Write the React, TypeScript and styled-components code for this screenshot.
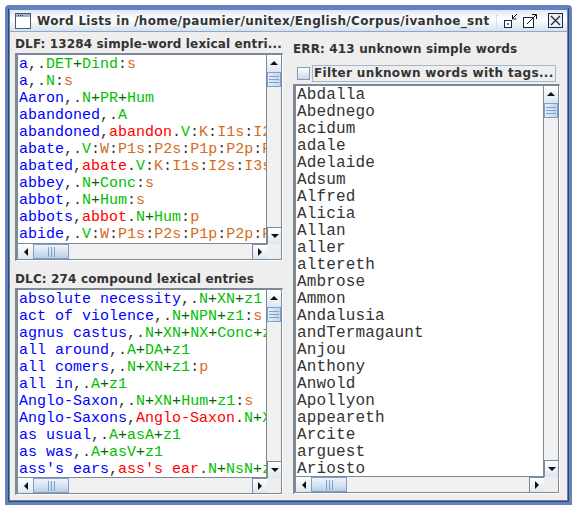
import React from 'react';
import styled, { createGlobalStyle } from 'styled-components';

const GlobalStyle = createGlobalStyle`
  html, body { margin: 0; padding: 0; background: #ffffff; }
  body { font-family: "DejaVu Sans", sans-serif; }
`;

const Frame = styled.div`
  box-sizing: border-box;
  width: 567px;
  height: 500px;
  margin: 5px 0 0 5px;
  border: 3px solid #6382bf;
  padding: 2px 2px 2px 2px;
  border-radius: 4px 4px 0 0;
  background: #6382bf;
  box-shadow: inset 1px 0 0 #3b4658, inset -1px 0 0 #3b4658, inset 0 -1px 0 #3b4658;
  display: flex;
  flex-direction: column;
`;

const Inner = styled.div`
  flex: 1;
  min-height: 0;
  display: flex;
  flex-direction: column;
  background: #eeeeee;
`;

const TitleBar = styled.div`
  height: 21px;
  flex: none;
  display: flex;
  align-items: center;
  gap: 6px;
  padding: 0 4px 0 5px;
  background: linear-gradient(#dde8f3, #ffffff 45%, #d5e2ee);
  border-bottom: 1px solid #8da7c8;
`;

const Title = styled.span`
  font-weight: bold;
  font-size: 12px;
  letter-spacing: 0.33px;
  color: #333333;
  white-space: nowrap;
`;

const Grip = styled.div`
  width: 8px;
  height: 14px;
  margin-left: auto;
  background-image: conic-gradient(#b5c4d6 25%, transparent 0 50%, #b5c4d6 0 75%, transparent 0);
  background-size: 2px 2px;
`;

const TitleButtons = styled.div`
  display: flex;
  align-items: center;
  margin-left: 1px;
`;

const TitleButton = styled.span<{ $gap?: number }>`
  display: flex;
  margin-left: ${(p) => p.$gap ?? 0}px;
`;

const Body = styled.div`
  flex: 1;
  min-height: 0;
  display: grid;
  grid-template-columns: 268px 267px;
  column-gap: 10px;
  padding: 5px 0 6px 5px;
`;

const Column = styled.div`
  display: flex;
  flex-direction: column;
  min-height: 0;
`;

const Label = styled.div<{ $top?: number }>`
  height: 15px;
  margin-top: ${(p) => p.$top ?? 0}px;
  flex: none;
  font-weight: bold;
  font-size: 12px;
  letter-spacing: 0.14px;
  line-height: 15px;
  color: #333333;
  white-space: nowrap;
`;

const FilterRow = styled.div`
  height: 20px;
  flex: none;
  margin-top: 6px;
  display: flex;
  align-items: center;
  gap: 2px;
  padding-left: 4px;
`;

const CheckBox = styled.span`
  box-sizing: border-box;
  width: 13px;
  height: 13px;
  border: 1px solid #8a9aab;
  background: linear-gradient(#ffffff, #c8d8ea);
`;

const FilterLabel = styled.span`
  font-weight: bold;
  font-size: 12px;
  letter-spacing: 0.35px;
  line-height: 15px;
  color: #333333;
  border: 1px solid #a3b8cc;
  padding: 0 1px;
  white-space: nowrap;
`;

const ScrollPane = styled.div<{ $height: number }>`
  box-sizing: border-box;
  height: ${(p) => p.$height}px;
  flex: none;
  margin-top: 1px;
  border: 1px solid #7a8a99;
  border-top-width: 2px;
  border-left-width: 2px;
  border-bottom-color: #ffffff;
  border-right-color: #ffffff;
  display: grid;
  grid-template-columns: 1fr 15px;
  grid-template-rows: 1fr 16px;
  background: #eeeeee;
`;

const ListBody = styled.div`
  background: #ffffff;
  overflow: hidden;
  padding: 1px 0 0 1px;
  border-right: 1px solid #7a8a99;
  border-bottom: 1px solid #7a8a99;
  border-left: 1px solid #7a8a99;
`;

const Row = styled.div<{ $wide?: boolean }>`
  height: 17px;
  font-family: "Liberation Mono", monospace;
  font-size: ${(p) => (p.$wide ? '16px' : '15px')};
  letter-spacing: ${(p) => (p.$wide ? '0.15px' : '0')};
  line-height: 17px;
  white-space: nowrap;
  color: #333333;
`;

const Seg = styled.span<{ $c: string }>`
  color: ${(p) => p.$c};
`;

const VBar = styled.div`
  display: flex;
  flex-direction: column;
  border-right: 1px solid #7a8a99;
  background: #f0f0f0;
`;

const HBar = styled.div`
  display: flex;
  border-bottom: 1px solid #7a8a99;
  border-left: 1px solid #7a8a99;
  background: #f0f0f0;
`;

const Corner = styled.div`
  border-right: 1px solid #7a8a99;
  border-bottom: 1px solid #7a8a99;
  background: #eeeeee;
`;

const ArrowButton = styled.div<{ $vertical?: boolean }>`
  flex: none;
  box-sizing: border-box;
  width: ${(p) => (p.$vertical ? '14px' : '15px')};
  height: ${(p) => (p.$vertical ? '17px' : '15px')};
  display: flex;
  align-items: center;
  justify-content: center;
  background: linear-gradient(#ffffff, #dce6f0);
`;

const BottomButton = styled(ArrowButton)`
  border-top: 1px solid #7a8a99;
  border-left: 1px solid #7a8a99;
`;

const Thumb = styled.div<{ $vertical?: boolean }>`
  flex: none;
  box-sizing: border-box;
  width: ${(p) => (p.$vertical ? '14px' : '36px')};
  height: 15px;
  display: flex;
  align-items: center;
  justify-content: center;
  border: 1px solid #7ea0cc;
  background: ${(p) =>
    p.$vertical
      ? 'linear-gradient(90deg, #e6eef6, #c4d6ea)'
      : 'linear-gradient(#eef3f9 0%, #d2e0ef 60%, #b9cde4 100%)'};
`;

const Spacer = styled.div`
  flex: 1;
`;

const BLUE = '#0000ff';
const RED = '#ff0000';
const GREEN = '#00c000';
const ORANGE = '#d56a1c';
const DARK = '#333333';

const Arrow = ({ dir }: { dir: 'up' | 'down' | 'left' | 'right' }) => {
  const pts = {
    up: '1,6 9,6 5,2',
    down: '1,3 9,3 5,7',
    left: '7,1 7,9 3,5',
    right: '3,1 3,9 7,5',
  }[dir];
  return (
    <svg width="10" height="10" viewBox="0 0 10 10">
      <polygon points={pts} fill="#111111" />
    </svg>
  );
};

const Bumps = ({ vertical }: { vertical?: boolean }) =>
  vertical ? (
    <svg width="10" height="7" viewBox="0 0 10 7">
      <path d="M0 .5h10M0 3.5h10M0 6.5h10" stroke="#7ea0cc" />
    </svg>
  ) : (
    <svg width="7" height="10" viewBox="0 0 7 10">
      <path d="M.5 0v10M3.5 0v10M6.5 0v10" stroke="#7ea0cc" />
    </svg>
  );

const WindowIcon = () => (
  <svg width="16" height="16" viewBox="0 0 16 16" style={{ flex: 'none' }}>
    <rect x=".5" y=".5" width="15" height="15" fill="#ffffff" stroke="#4a5a6a" />
    <rect x="1" y="1" width="14" height="3" fill="#9fb3c8" />
    <path d="M3 2.5h1M5 2.5h1M7 2.5h1" stroke="#33404d" />
  </svg>
);

const IconifyIcon = () => (
  <svg width="14" height="15" viewBox="0 0 14 15">
    <rect x=".5" y="7.5" width="7" height="7" fill="#ffffff" stroke="#222244" />
    <rect x="3" y="10" width="2" height="2" fill="#5b7cb0" />
    <path d="M8 6l5-5M8.5 2v4h4" fill="none" stroke="#111111" />
  </svg>
);

const MaximizeIcon = () => (
  <svg width="15" height="15" viewBox="0 0 15 15">
    <rect x=".5" y="4.5" width="10" height="10" fill="#ffffff" stroke="#222244" />
    <path d="M4 11l9-9M9 1.5h4.500v4.500" fill="none" stroke="#111111" />
  </svg>
);

const CloseIcon = () => (
  <svg width="15" height="15" viewBox="0 0 15 15">
    <rect x=".5" y=".5" width="14" height="14" fill="#e8eef5" stroke="#222244" />
    <path d="M3 3l9 9M12 3l-9 9" stroke="#222222" strokeWidth="1.2" />
  </svg>
);

// form,lemma.CODE+CODE:infl:infl
const DelaLine = ({ text }: { text: string }) => {
  const comma = text.indexOf(',');
  const dot = text.indexOf('.', comma);
  const form = text.slice(0, comma);
  const lemma = text.slice(comma + 1, dot);
  const rest = text.slice(dot + 1);
  const colon = rest.indexOf(':');
  const codes = colon === -1 ? rest : rest.slice(0, colon);
  const infl = colon === -1 ? '' : rest.slice(colon);
  return (
    <Row>
      <Seg $c={BLUE}>{form}</Seg>
      <Seg $c={DARK}>,</Seg>
      <Seg $c={RED}>{lemma}</Seg>
      <Seg $c={DARK}>.</Seg>
      {codes.split('+').map((c, i) => (
        <React.Fragment key={i}>
          {i > 0 && <Seg $c="#006600">+</Seg>}
          <Seg $c={GREEN}>{c}</Seg>
        </React.Fragment>
      ))}
      {infl.split(':').slice(1).map((c, i) => (
        <React.Fragment key={i}>
          <Seg $c={DARK}>:</Seg>
          <Seg $c={ORANGE}>{c}</Seg>
        </React.Fragment>
      ))}
    </Row>
  );
};

const Pane = ({ height, children }: { height: number; children: React.ReactNode }) => (
  <ScrollPane $height={height}>
    <ListBody>{children}</ListBody>
    <VBar>
      <ArrowButton $vertical>
        <Arrow dir="up" />
      </ArrowButton>
      <Thumb $vertical>
        <Bumps vertical />
      </Thumb>
      <Spacer />
      <BottomButton $vertical>
        <Arrow dir="down" />
      </BottomButton>
    </VBar>
    <HBar>
      <ArrowButton>
        <Arrow dir="left" />
      </ArrowButton>
      <Thumb>
        <Bumps />
      </Thumb>
      <Spacer />
      <BottomButton>
        <Arrow dir="right" />
      </BottomButton>
    </HBar>
    <Corner />
  </ScrollPane>
);

const dlf = [
  'a,.DET+Dind:s',
  'a,.N:s',
  'Aaron,.N+PR+Hum',
  'abandoned,.A',
  'abandoned,abandon.V:K:I1s:I2s:I3s',
  'abate,.V:W:P1s:P2s:P1p:P2p:P3p',
  'abated,abate.V:K:I1s:I2s:I3s',
  'abbey,.N+Conc:s',
  'abbot,.N+Hum:s',
  'abbots,abbot.N+Hum:p',
  'abide,.V:W:P1s:P2s:P1p:P2p:P3p',
];

const dlc = [
  'absolute necessity,.N+XN+z1',
  'act of violence,.N+NPN+z1:s',
  'agnus castus,.N+XN+NX+Conc+z1',
  'all around,.A+DA+z1',
  'all comers,.N+XN+z1:p',
  'all in,.A+z1',
  'Anglo-Saxon,.N+XN+Hum+z1:s',
  'Anglo-Saxons,Anglo-Saxon.N+XN+Hum',
  'as usual,.A+asA+z1',
  'as was,.A+asV+z1',
  "ass's ears,ass's ear.N+NsN+z1:p",
];

const err = [
  'Abdalla', 'Abednego', 'acidum', 'adale', 'Adelaide', 'Adsum', 'Alfred', 'Alicia', 'Allan', 'aller',
  'altereth', 'Ambrose', 'Ammon', 'Andalusia', 'andTermagaunt', 'Anjou', 'Anthony', 'Anwold', 'Apollyon',
  'appeareth', 'Arcite', 'arguest', 'Ariosto',
];

const App = () => (
  <>
    <GlobalStyle />
    <Frame>
      <Inner>
        <TitleBar>
          <WindowIcon />
          <Title>Word Lists in /home/paumier/unitex/English/Corpus/ivanhoe_snt</Title>
          <Grip />
          <TitleButtons>
            <TitleButton>
              <IconifyIcon />
            </TitleButton>
            <TitleButton $gap={5}>
              <MaximizeIcon />
            </TitleButton>
            <TitleButton $gap={10}>
              <CloseIcon />
            </TitleButton>
          </TitleButtons>
        </TitleBar>
        <Body>
          <Column>
            <Label>DLF: 13284 simple-word lexical entri...</Label>
            <Pane height={208}>
              {dlf.map((l) => (
                <DelaLine key={l} text={l} />
              ))}
            </Pane>
            <Label $top={11}>DLC: 274 compound lexical entries</Label>
            <Pane height={207}>
              {dlc.map((l) => (
                <DelaLine key={l} text={l} />
              ))}
            </Pane>
          </Column>
          <Column>
            <Label $top={5}>ERR: 413 unknown simple words</Label>
            <FilterRow>
              <CheckBox />
              <FilterLabel>Filter unknown words with tags...</FilterLabel>
            </FilterRow>
            <Pane height={410}>
              {err.map((w) => (
                <Row $wide key={w}>
                  {w}
                </Row>
              ))}
            </Pane>
          </Column>
        </Body>
      </Inner>
    </Frame>
  </>
);

export default App;
